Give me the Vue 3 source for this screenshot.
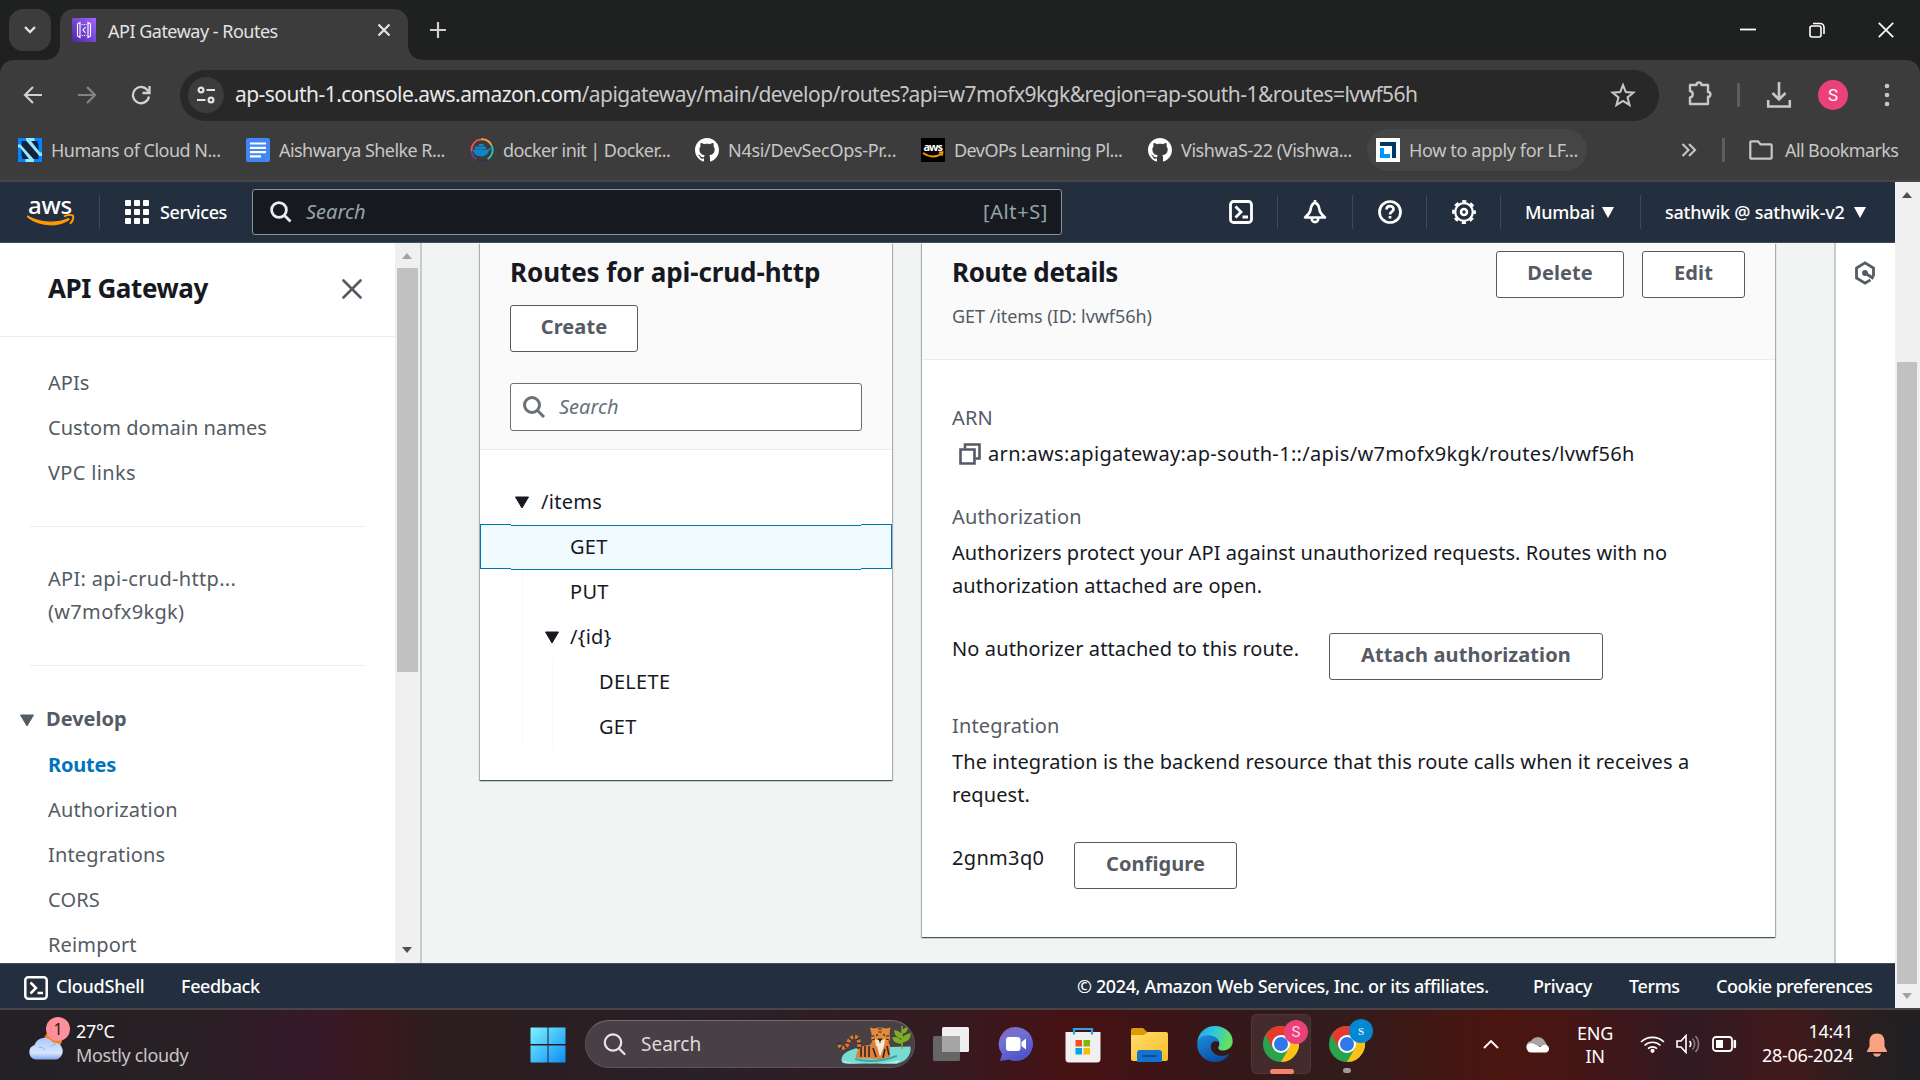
<script setup>
const bookmarks = [
  { icon: 'cn', label: 'Humans of Cloud N...', cls: 'b1' },
  { icon: 'doc', label: 'Aishwarya Shelke R...', cls: 'b2' },
  { icon: 'docker', label: 'docker init | Docker...', cls: 'b3' },
  { icon: 'github', label: 'N4si/DevSecOps-Pr...', cls: 'b4' },
  { icon: 'aws', label: 'DevOPs Learning Pl...', cls: 'b5' },
  { icon: 'github', label: 'VishwaS-22 (Vishwa...', cls: 'b6' },
  { icon: 'lf', label: 'How to apply for LF...', cls: 'b7' },
]
const topLinks = ['APIs', 'Custom domain names', 'VPC links']
const developLinks = ['Routes', 'Authorization', 'Integrations', 'CORS', 'Reimport']
</script>

<template>
  <div class="screen">
    <!-- browser tab strip -->
    <div class="tabstrip">
      <div class="tabmenu">
        <svg width="14" height="10" viewBox="0 0 14 10"><path d="M2 2l5 5 5-5" fill="none" stroke="#e3e3e3" stroke-width="2.4" /></svg>
      </div>
      <div class="tab">
        <svg class="favicon" width="24" height="24" viewBox="0 0 24 24">
          <defs><linearGradient id="gw" x1="0" y1="1" x2="1" y2="0"><stop offset="0" stop-color="#4d27a8" /><stop offset="1" stop-color="#a166ff" /></linearGradient></defs>
          <rect width="24" height="24" fill="url(#gw)" />
          <path d="M8 4.500L5.500 6v12L8 19.500zM16 4.500L18.500 6v12L16 19.500zM13.500 9L11 12l2.500 3" fill="none" stroke="#fff" stroke-width="1.100" />
          <path d="M9.500 6.500h5M9.500 17.500h5" stroke="#fff" stroke-dasharray="1.200 1" />
        </svg>
        <span class="tabtitle">API Gateway - Routes</span>
        <svg class="tabclose" width="14" height="14" viewBox="0 0 14 14"><path d="M1.500 1.500l11 11M12.500 1.500l-11 11" stroke="#e3e3e3" stroke-width="2.200" /></svg>
      </div>
      <svg class="newtab" width="18" height="18" viewBox="0 0 18 18"><path d="M9 1v16M1 9h16" stroke="#d0d0d0" stroke-width="2.200" /></svg>
      <div class="winctl">
        <svg width="16" height="16" viewBox="0 0 16 16"><path d="M0 7.500h16" stroke="#fff" stroke-width="1.800" /></svg>
        <svg width="16" height="16" viewBox="0 0 16 16" fill="none" stroke="#fff" stroke-width="1.600"><rect x="1" y="4" width="11" height="11" rx="2" /><path d="M4 1.500h7a4 4 0 0 1 4 4V12" /></svg>
        <svg width="16" height="16" viewBox="0 0 16 16"><path d="M.8.8l14.400 14.400M15.200.8L.8 15.200" stroke="#fff" stroke-width="1.700" /></svg>
      </div>
    </div>

    <!-- address bar -->
    <div class="toolbar">
      <svg class="nav1" width="20" height="20" viewBox="0 0 20 20" fill="none" stroke="#d0d0d0" stroke-width="2.200"><path d="M19 10H2.500M10 2l-8 8 8 8" /></svg>
      <svg class="nav2" width="20" height="20" viewBox="0 0 20 20" fill="none" stroke="#838383" stroke-width="2.200"><path d="M1 10h16.500M10 2l8 8-8 8" /></svg>
      <svg class="nav3" width="20" height="20" viewBox="0 0 20 20" fill="none" stroke="#d0d0d0" stroke-width="2.300"><path d="M17.300 6.500A8.100 8.100 0 1 0 18 11.500" /><path d="M18.500 1v7h-7" /></svg>
      <div class="omnibox">
        <span class="chip">
          <svg width="20" height="20" viewBox="0 0 20 20" fill="none" stroke="#e3e3e3" stroke-width="2.200"><circle cx="5" cy="5" r="2.400" /><path d="M10.500 5H19M1 15h8.500" /><circle cx="15" cy="15" r="2.400" /></svg>
        </span>
        <span class="url"><b>ap-south-1.console.aws.amazon.com</b>/apigateway/main/develop/routes?api=w7mofx9kgk&amp;region=ap-south-1&amp;routes=lvwf56h</span>
        <svg class="star" width="26" height="26" viewBox="0 0 24 24"><path d="M12 2.800l2.600 6.500 7 .5-5.400 4.500 1.800 6.900-6-3.800-6 3.800 1.800-6.900L2.400 9.800l7-.5z" fill="none" stroke="#c7c7c7" stroke-width="1.900" /></svg>
      </div>
      <svg class="puzzle" width="26" height="26" viewBox="0 0 26 26"><path d="M3 5h6.500a2.500 2.500 0 0 1 5 0H21v7a2.400 2.400 0 0 1 0 4.800V24H3v-6.500a3.300 3.300 0 0 0 0-6.500z" fill="none" stroke="#c7c7c7" stroke-width="2.400" stroke-linejoin="round" /></svg>
      <i class="vbar"></i>
      <svg class="dl" width="26" height="28" viewBox="0 0 26 28" fill="none" stroke="#c7c7c7" stroke-width="2.600"><path d="M13 1v17M6.500 12l6.500 6.500 6.500-6.500M2.200 19v6.500h21.600V19" /></svg>
      <span class="avatar">S</span>
      <svg class="dots" width="6" height="24" viewBox="0 0 6 24" fill="#c7c7c7"><circle cx="3" cy="3" r="2.300" /><circle cx="3" cy="12" r="2.300" /><circle cx="3" cy="21" r="2.300" /></svg>
    </div>

    <!-- bookmarks -->
    <div class="bookmarks">
      <div v-for="b in bookmarks" :key="b.label" class="bm" :class="b.cls">
        <svg v-if="b.icon === 'cn'" width="24" height="24" viewBox="0 0 24 24"><rect width="24" height="24" fill="#0086ff" /><path d="M3.500 3h17v18h-17z" fill="#16223c" /><path d="M8 0h8.500v3H13l9 11.500h2V18h-2.500L8 2.500zM0 6.500h2.500L16 21.500V24H7.500v-3H11L2 9.500H0z" fill="#93eaff" /><path d="M19 3.500l3 0v5zM2 15.500l3 5H2z" fill="#0086ff" /></svg>
        <svg v-else-if="b.icon === 'doc'" width="24" height="24" viewBox="0 0 24 24"><rect width="24" height="24" rx="2" fill="#4285f4" /><path d="M4 5.500h16M4 9.800h16M4 14.100h16M4 18.400h11" stroke="#fff" stroke-width="2.200" /></svg>
        <svg v-else-if="b.icon === 'docker'" width="24" height="24" viewBox="0 0 24 24" fill="none"><path d="M1.500 13A10.700 10.700 0 0 1 11 1.300" stroke="#ef4b5f" stroke-width="1.800" /><path d="M11 1.300a10.700 10.700 0 0 1 10.500 6" stroke="#f7a64a" stroke-width="1.800" /><path d="M21.500 7.300a10.700 10.700 0 0 1-4 14" stroke="#2fc5c0" stroke-width="1.800" /><path d="M17.500 21.300a10.700 10.700 0 0 1-11 0" stroke="#1a3a5a" stroke-width="1.500" /><path d="M6.500 21.300A10.700 10.700 0 0 1 1.500 13" stroke="#6a3fa0" stroke-width="1.800" /><path d="M3 11.500h15.500c.3-1.500 1.500-2 3-1.300-.5 1.500-1.500 2-2.500 2-1 4-3.500 6-8 6s-7.500-2-8-6.700zM5 8.500h11V11H5zM9 6h4.500v2H9z" fill="#0e87c9" /></svg>
        <svg v-else-if="b.icon === 'github'" width="24" height="24" viewBox="0 0 16 16"><path fill="#fff" d="M8 0C3.580 0 0 3.580 0 8c0 3.540 2.290 6.530 5.470 7.590.4.070.550-.170.550-.380 0-.190-.010-.820-.010-1.490-2.010.370-2.530-.490-2.690-.940-.090-.230-.480-.940-.820-1.130-.280-.150-.680-.520-.010-.530.630-.010 1.080.580 1.230.820.720 1.210 1.870.870 2.330.660.070-.520.280-.870.510-1.070-1.780-.200-3.640-.890-3.640-3.950 0-.870.310-1.590.820-2.150-.080-.200-.360-1.020.080-2.120 0 0 .670-.210 2.200.820.640-.180 1.320-.270 2-.270s1.360.090 2 .270c1.530-1.040 2.200-.820 2.200-.820.440 1.100.160 1.920.080 2.120.510.560.820 1.270.820 2.150 0 3.070-1.870 3.750-3.650 3.950.290.250.540.730.540 1.480 0 1.070-.010 1.930-.010 2.200 0 .210.150.460.550.380A8.010 8.010 0 0 0 16 8c0-4.420-3.580-8-8-8z" /></svg>
        <svg v-else-if="b.icon === 'aws'" width="24" height="24" viewBox="0 0 24 24"><rect width="24" height="24" fill="#000" /><text x="2.500" y="13" font-size="11" font-weight="700" font-family="Noto Sans, sans-serif" fill="#fff" textLength="19">aws</text><path d="M2 15c6 4.500 13 4.500 18 1M18 14.500l3.500-.3-.8 3.500" fill="none" stroke="#f90" stroke-width="1.800" /></svg>
        <svg v-else width="24" height="24" viewBox="0 0 24 24"><rect width="24" height="24" fill="#fff" /><path d="M4 4h16v16h-4V8H4z" fill="#003764" /><path d="M4 10h4v6h6v4H4z" fill="#0094ff" /></svg>
        <span>{{ b.label }}</span>
      </div>
      <svg class="more" width="16" height="14" viewBox="0 0 16 14"><path d="M1.500 1l6 6-6 6M8 1l6 6-6 6" fill="none" stroke="#c7c7c7" stroke-width="2.100" /></svg>
      <i class="vbar2"></i>
      <svg class="folder" width="24" height="20" viewBox="0 0 24 20"><path d="M1.300 2.500q0-1.200 1.200-1.200H9l2.500 3H21.500q1.200 0 1.200 1.200v12q0 1.200-1.200 1.200h-19q-1.200 0-1.200-1.200z" fill="none" stroke="#c7c7c7" stroke-width="2.200" /></svg>
      <span class="allbm">All Bookmarks</span>
    </div>

    <!-- page viewport -->
    <div class="viewport">
      <div class="page">
        <header class="awsbar">
          <svg class="logo" width="48" height="44" viewBox="0 0 48 44">
            <text x="1" y="26" font-size="23" font-weight="500" font-family="Noto Sans, sans-serif" fill="#fff" textLength="44" lengthAdjust="spacingAndGlyphs">aws</text>
            <path d="M0 28.500C13 39 32 39 42 31.500l-.5-1C31 35.500 14 36 .5 28z" fill="#f90" stroke="#f90" stroke-width="1.200" />
            <path d="M37 28.500c3-2 7-2 9-.8.500 2.500-.5 6-3 8" fill="none" stroke="#f90" stroke-width="2" />
          </svg>
          <i class="sep s0"></i>
          <svg class="grid" width="24" height="24" viewBox="0 0 24 24" fill="#fff"><template v-for="r in 3" :key="r"><rect v-for="c in 3" :key="c" :x="(c - 1) * 9" :y="(r - 1) * 9" width="6" height="6" rx="1" /></template></svg>
          <span class="services">Services</span>
          <div class="topsearch">
            <svg width="22" height="22" viewBox="0 0 22 22" fill="none" stroke="#eaeded" stroke-width="2.800"><circle cx="9" cy="9" r="7.400" /><path d="M14 14l6.500 6.500" /></svg>
            <em>Search</em><span>[Alt+S]</span>
          </div>
          <svg class="ti shell" width="24" height="24" viewBox="0 0 24 24" fill="none" stroke="#fff" stroke-width="2.800"><rect x="1.500" y="1.500" width="21" height="21" rx="3" /><path d="M6.500 6.500l5.500 5.500-5.500 5.500M13.500 17h5.500" /></svg>
          <i class="sep s1"></i>
          <svg class="ti bell" width="24" height="24" viewBox="0 0 24 24" fill="none" stroke="#fff" stroke-width="2.600" stroke-linejoin="round"><path d="M12 2.500c-3 1.500-4 3.500-4.300 6.500-.3 3-1 4.500-5.700 8.500h20c-4.700-4-5.400-5.500-5.700-8.500C16 6 15 4 12 2.500zM8.700 18.500a3.300 3.600 0 0 0 6.600 0M12 0v3" /></svg>
          <i class="sep s2"></i>
          <svg class="ti help" width="24" height="24" viewBox="0 0 24 24" fill="none" stroke="#fff" stroke-width="2.700"><circle cx="12" cy="12" r="10.500" /><path d="M8.500 9.500c0-4.500 7-4.300 7-.3 0 2.600-3.500 2.600-3.500 5.300M12 16v2.500" /></svg>
          <i class="sep s3"></i>
          <svg class="ti gear" width="24" height="24" viewBox="0 0 24 24" fill="none" stroke="#fff"><circle cx="12" cy="12" r="8.800" stroke-width="2.300" /><circle cx="12" cy="12" r="10.600" stroke-width="2.600" stroke-dasharray="4.200 4.125" stroke-dashoffset="2.100" /><circle cx="12" cy="12" r="3" stroke-width="2.600" /></svg>
          <i class="sep s4"></i>
          <span class="region">Mumbai</span><i class="tri"></i>
          <i class="sep s5"></i>
          <span class="account">sathwik @ sathwik-v2</span><i class="tri"></i>
        </header>

        <div class="main">
          <nav class="side">
            <div class="sidehead">
              <h2>API Gateway</h2>
              <svg width="20" height="20" viewBox="0 0 20 20"><path d="M1.500 1.500l17 17M18.500 1.500l-17 17" stroke="#545b64" stroke-width="2.600" stroke-linecap="round" /></svg>
            </div>
            <div class="links first"><a v-for="l in topLinks" :key="l" :class="{ wide: l === 'VPC links' }">{{ l }}</a></div>
            <hr />
            <p class="apiname">API: api-crud-http...<br />(w7mofx9kgk)</p>
            <hr />
            <div class="develop"><svg width="16" height="13" viewBox="0 0 16 13"><path d="M1.500 1h13L8 12z" fill="#545b64" stroke="#545b64" stroke-linejoin="round" /></svg><b>Develop</b></div>
            <div class="links dev"><a v-for="l in developLinks" :key="l" :class="{ on: l === 'Routes' }">{{ l }}</a></div>
          </nav>
          <div class="sidebar-scroll">
            <i class="up grey"></i><i class="thumb"></i><i class="down"></i>
          </div>

          <div class="content">
            <section class="card routes">
              <div class="rhead">
                <h2>Routes for api-crud-http</h2>
                <button class="btn create">Create</button>
                <div class="rsearch">
                  <svg width="22" height="22" viewBox="0 0 22 22" fill="none" stroke="#687078" stroke-width="3"><circle cx="9" cy="9" r="7.500" /><path d="M14 14l7 7" /></svg><em>Search</em>
                </div>
              </div>
              <div class="tree">
                <div class="node l0 first"><svg width="16" height="13" viewBox="0 0 16 13"><path d="M1.500 1h13L8 12z" fill="#16191f" stroke="#16191f" stroke-linejoin="round" /></svg>/items</div>
                <div class="sel"><i class="selside l"></i><div class="selmid">GET</div><i class="selside r"></i></div>
                <div class="branch">
                  <div class="node l1">PUT</div>
                  <div class="node l1t"><svg width="16" height="13" viewBox="0 0 16 13"><path d="M1.500 1h13L8 12z" fill="#16191f" stroke="#16191f" stroke-linejoin="round" /></svg>/{id}</div>
                  <div class="branch inner">
                    <div class="node l2">DELETE</div>
                    <div class="node l2">GET</div>
                  </div>
                </div>
              </div>
            </section>

            <section class="card details">
              <div class="dhead">
                <div>
                  <h2>Route details</h2>
                  <p class="sub">GET /items (ID: lvwf56h)</p>
                </div>
                <div class="actions"><button class="btn delete">Delete</button><button class="btn edit">Edit</button></div>
              </div>
              <div class="dbody">
                <label>ARN</label>
                <p class="arn"><svg width="22" height="22" viewBox="0 0 22 22" fill="none" stroke="#545b64" stroke-width="2.600"><path d="M1.500 6.500h14v14h-14z" /><path d="M6 5.500V1.500h14.500V15.500h-4" /></svg><span>arn:aws:apigateway:ap-south-1::/apis/w7mofx9kgk/routes/lvwf56h</span></p>
                <label>Authorization</label>
                <p class="t1">Authorizers protect your API against unauthorized requests. Routes with no<br />authorization attached are open.</p>
                <div class="act"><span class="t2">No authorizer attached to this route.</span><button class="btn attach">Attach authorization</button></div>
                <label>Integration</label>
                <p class="t3">The integration is the backend resource that this route calls when it receives a<br />request.</p>
                <div class="act last"><span class="t4">2gnm3q0</span><button class="btn configure">Configure</button></div>
              </div>
            </section>
          </div>

          <aside class="tools">
            <svg width="22" height="24" viewBox="0 0 22 24" fill="none" stroke="#545b64" stroke-width="2.800"><path d="M19.500 15.500V7L11 1.800 2.500 7v10l8.500 5.200 5.500-3.300M11 12l8.500 5.500" /><circle cx="11" cy="12" r="2.200" fill="#545b64" stroke-width="1.500" /></svg>
          </aside>
        </div>

        <footer class="awsfoot">
          <svg width="24" height="24" viewBox="0 0 24 24" fill="none" stroke="#fff" stroke-width="2.500"><rect x="1.300" y="1.300" width="21.400" height="21.400" rx="3" /><path d="M6.500 6.500l5.500 5.500-5.500 5.500M13.500 17h5.500" /></svg>
          <span class="f1">CloudShell</span><span class="f2">Feedback</span>
          <span class="f3">© 2024, Amazon Web Services, Inc. or its affiliates.</span>
          <span class="f4">Privacy</span><span class="f5">Terms</span><span class="f6">Cookie preferences</span>
        </footer>
      </div>
      <div class="page-scroll"><i class="up"></i><i class="thumb"></i><i class="down grey"></i></div>
    </div>

    <!-- Windows taskbar -->
    <div class="taskbar">
      <div class="weather">
        <svg width="42" height="44" viewBox="0 0 42 44">
          <defs><linearGradient id="cl" x1="0" y1="0" x2="0" y2="1"><stop offset="0" stop-color="#a9c8fb" /><stop offset=".7" stop-color="#d6e6fd" /><stop offset="1" stop-color="#7fa6ee" /></linearGradient></defs>
          <circle cx="26" cy="24" r="9" fill="#f5821f" />
          <path d="M8.500 43.500a7.500 7.500 0 0 1-1-14.500A10.500 10.500 0 0 1 26 26.500a8.500 8.500 0 0 1 2.500 17z" fill="url(#cl)" />
          <path d="M12 31a8 8 0 0 1 6.500 3M24 31q2-3 5-3" stroke="#8eb2f2" fill="none" />
        </svg>
        <span class="wbadge">1</span>
        <div class="wtext"><span class="deg">27°C</span><span class="cond">Mostly cloudy</span></div>
      </div>
      <svg class="start" width="36" height="36" viewBox="0 0 36 36"><defs><linearGradient id="win" x1="0" y1="0" x2="1" y2="1"><stop offset="0" stop-color="#7df3ff" /><stop offset="1" stop-color="#0a8df5" /></linearGradient></defs><path d="M1 .5h16.500v16.500H.5V1zM18.500.5H35l.5.500v16h-17zM.5 18.500h17v17H1l-.5-.5zM18.500 18.500h17V35l-.5.500H18.500z" fill="url(#win)" /></svg>
      <div class="tsearch">
        <svg class="mag" width="23" height="23" viewBox="0 0 23 23" fill="none" stroke="#e8e8ea" stroke-width="2.200" stroke-linecap="round"><circle cx="10" cy="9.500" r="8.200" /><path d="M16 15.500l5.500 5.500" /></svg>
        <span>Search</span>
        <svg class="tiger" width="76" height="40" viewBox="0 0 76 40">
          <path d="M5 37C2 30 12 23.500 25 22.500l48.500-1C75 30 68 37.500 60 38.500H12q-6 0-7-1.500z" fill="#7adbd2" />
          <path d="M5 36q30 6 58-1l-3 3.500H12q-5 0-7-2.500z" fill="#b5f2e6" />
          <path d="M18 34q20 5 42-3" stroke="#3aa6a5" stroke-width="2" fill="none" />
          <path d="M2 18c0 8 8 5 9 0s7-9 10-4-1 8 3 13" stroke="#d9792f" stroke-width="3.600" fill="none" />
          <path d="M2 18c0 8 8 5 9 0s7-9 10-4-1 8 3 13" stroke="#2d2430" stroke-width="4" stroke-dasharray="1.400 3.200" fill="none" />
          <path d="M19 33c0-9 5-13 14-13l5-8h10l5 8v12l-10 2z" fill="#df8136" />
          <path d="M24 22v10M28 21v11M32 21v11M50 21l2 9M36 23l3 9M48 24l-2 9" stroke="#30232c" stroke-width="1.600" />
          <path d="M33 2.500l4 1q6-2 12 0l4.500-1-1 6q2 7-3 11-6 4-12-.5-4.500-4-3-10z" fill="#e48a3b" />
          <path d="M38 14q5 3 10 0l-1 7q-4 2-8 0z" fill="#f4eadc" /><path d="M41 14h4l-2 2zM41 4h4M41.500 7h3M34 11h3.500M49 11h3.500M35 15l3-1M49 14l3 1M43 16v2" stroke="#2b2028" fill="#2b2028" />
          <path d="M39 10h2M46 10h2" stroke="#224133" stroke-width="1.700" />
          <path d="M40 21l3 11 4-11z" fill="#f4eadc" />
          <path d="M65 24V1M65 13c-5-1-7-4-7-7 5 1 7 4 7 7zM65 18c-5 0-8-2-9-5 5-1 8 2 9 5zM65 17c5-1 8-4 8-8-5 1-8 4-8 8zM65 8q5-1 5-5-4 1-5 5z" fill="#80ad28" stroke="#80ad28" stroke-width="1.500" />
        </svg>
      </div>
      <svg class="tv" width="36" height="34" viewBox="0 0 36 34"><rect y="9" width="27" height="25" rx="1.500" fill="#666" /><rect x="9" width="27" height="25" rx="1.500" fill="#efefef" /><rect x="9" y="9" width="18" height="16" fill="#a6a4a4" /></svg>
      <svg class="chat" width="36" height="36" viewBox="0 0 36 36"><defs><linearGradient id="ch" x1="0" y1="0" x2=".5" y2="1"><stop offset="0" stop-color="#8d64a8" /><stop offset=".4" stop-color="#7172d4" /><stop offset="1" stop-color="#5055ca" /></linearGradient></defs><path d="M18 1a17 17 0 1 1-7 32.500L2 35l2-7A17 17 0 0 1 18 1z" fill="url(#ch)" /><rect x="8" y="11" width="14.500" height="14" rx="3" fill="#fff" /><path d="M23.500 16l4.500-3.500v11L23.500 20z" fill="#fff" /></svg>
      <svg class="store" width="36" height="36" viewBox="0 0 36 36"><path d="M.5 5h35v27q0 3.500-3.500 3.500H4Q.5 35.500.5 32z" fill="#f0f0f0" /><path d="M9 7.500V2h18v5.500" fill="none" stroke="#2aa5e8" stroke-width="2.200" /><path d="M10.500 13H17v6.500h-6.500z" fill="#f25022" /><path d="M18.500 13H25v6.500h-6.500z" fill="#7fba00" /><path d="M10.500 21H17v6.500h-6.500z" fill="#00a4ef" /><path d="M18.500 21H25v6.500h-6.500z" fill="#ffb900" /></svg>
      <svg class="exp" width="37" height="34" viewBox="0 0 37 34"><defs><linearGradient id="fo" x1="0" y1="0" x2="1" y2="1"><stop offset="0" stop-color="#ffdd6b" /><stop offset="1" stop-color="#f9bd28" /></linearGradient></defs><path d="M0 2q0-2 2-2h10l4 4-3 8H0z" fill="#dd9a05" /><path d="M0 7h13l3.500-3H35q2 0 2 2v25q0 2-2 2H2q-2 0-2-2z" fill="url(#fo)" /><path d="M6 34V25q0-3 3-3h19q3 0 3 3v9z" fill="#1173ce" /><path d="M12 28h13" stroke="#0a4e96" stroke-width="1.800" stroke-linecap="round" /></svg>
      <svg class="edge" width="36" height="36" viewBox="0 0 36 36"><defs><linearGradient id="e1" x1="0" y1="0" x2="1" y2=".3"><stop offset="0" stop-color="#2b9fe6" /><stop offset=".5" stop-color="#2fc6de" /><stop offset="1" stop-color="#62e25a" /></linearGradient><linearGradient id="e2" x1="0" y1="0" x2=".6" y2="1"><stop offset="0" stop-color="#1a8ddb" /><stop offset="1" stop-color="#0b4fa3" /></linearGradient></defs><path d="M.3 17C1 6 9 0 18 0c10 0 17.700 7 17.700 15 0 6-4.500 9.500-9.500 9.500-5 0-5.500-2.500-4.500-4 1.500-2 1-8.500-6.500-9.500C7 10.500 1.500 13 .3 17z" fill="url(#e1)" /><path d="M.2 18.500C.5 12 6 9 11.500 9.200 17 9.500 21 12 22 16c-7-3-9.500 3-7.500 8 3 6.500 12 7.500 18 3.500-3 5-8 8.500-14.500 8.500C8 36 0 28 .2 18.500z" fill="url(#e2)" /></svg>
      <div v-for="n in 2" :key="n" class="ctile" :class="n === 1 ? 'active' : 'idle'">
        <svg width="36" height="36" viewBox="0 0 36 36"><circle cx="18" cy="18" r="18" fill="#2ba24c" /><path d="M2.400 9A18 18 0 0 1 33.600 9H18l-7.800 13.500z" fill="#e33b2e" /><path d="M33.600 9A18 18 0 0 1 18 36l7.800-13.500L18 9z" fill="#fbc116" /><circle cx="18" cy="18" r="9" fill="#fff" /><circle cx="18" cy="18" r="7" fill="#2f78ea" /></svg>
        <span class="cbadge">S</span><i class="ind"></i>
      </div>
      <svg class="chev" width="16" height="10" viewBox="0 0 16 10"><path d="M1 9l7-7 7 7" fill="none" stroke="#fff" stroke-width="1.900" /></svg>
      <svg class="od" width="25" height="17" viewBox="0 0 25 17"><path d="M1 12a5 5 0 0 1 4-7A8 8 0 0 1 18 4l3 5z" fill="#aaa3a3" /><path d="M5 16.500a5 5 0 0 1-3-8.500q4-2 8 1l4 2q3-3 6.500-2a4 4 0 0 1 0 7.500z" fill="#fff" /></svg>
      <div class="lang"><span>ENG</span><span>IN</span></div>
      <svg class="wifi" width="25" height="18" viewBox="0 0 25 18" fill="none" stroke="#fff" stroke-width="1.600"><path d="M1 7a16.500 16.500 0 0 1 23 0M4.500 10.500a11.500 11.500 0 0 1 16 0M8 13.700a6.500 6.500 0 0 1 9 0" /><circle cx="12.500" cy="15.800" r="1.300" fill="#fff" /></svg>
      <svg class="vol" width="25" height="20" viewBox="0 0 25 20" fill="none" stroke="#fff" stroke-width="1.600"><path d="M1 7h4l5-5.500v17L5 13H1zM13.500 7a4.500 4.500 0 0 1 0 6" /><path d="M16.500 4.500a8 8 0 0 1 0 11M19.500 2a12 12 0 0 1 0 16" stroke="#8a7676" /></svg>
      <svg class="bat" width="25" height="16" viewBox="0 0 25 16" fill="none" stroke="#fff" stroke-width="1.800"><rect x="1" y="1" width="19" height="14" rx="3" /><path d="M22.800 5v6" stroke-width="2.600" stroke-linecap="round" /><rect x="4" y="4" width="7" height="8" fill="#fff" stroke="none" /></svg>
      <div class="clock"><span class="time">14:41</span><span class="date">28-06-2024</span></div>
      <svg class="nbell" width="20" height="24" viewBox="0 0 20 24" fill="#fba184"><path d="M10 .5c5 0 7.500 3.500 7.500 8v5L20 18v1H0v-1l2.500-4.500v-5c0-4.500 2.500-8 7.500-8zM6 20.500h8q-1 3.300-4 3.300t-4-3.300z" /></svg>
    </div>
  </div>
</template>

<style>
body { margin: 0; overflow: hidden; }
</style>

<style scoped>
.screen { width: 1920px; height: 1080px; overflow: hidden; display: flex; flex-direction: column; font-family: "Noto Sans", "Open Sans", sans-serif; font-size: 20px; white-space: nowrap; background: #3c3c3c; }
.screen * { box-sizing: border-box; }
svg { display: block; flex: none; }
h2, p { margin: 0; }
i { display: block; flex: none; }

.tabstrip { position: relative; height: 60px; flex: none; display: flex; background: #1f2020; }
.tabmenu { width: 42px; height: 42px; margin: 9px 9px 0; border-radius: 14px; background: #3c3c3c; display: flex; align-items: center; justify-content: center; }
.tab { position: relative; width: 348px; height: 51px; margin-top: 9px; border-radius: 14px 14px 0 0; background: #3c3c3c; display: flex; padding-left: 12px; }
.tab::before, .tab::after { content: ""; position: absolute; bottom: 0; width: 14px; height: 14px; }
.tab::before { left: -14px; background: radial-gradient(circle at 0 0, transparent 13.5px, #3c3c3c 14px); }
.tab::after { right: -14px; background: radial-gradient(circle at 100% 0, transparent 13.5px, #3c3c3c 14px); }
.favicon { margin-top: 9px; }
.tabtitle { width: 269px; margin-left: 12px; line-height: 45px; font-size: 18px; letter-spacing: -0.5px; color: #e3e3e3; }
.tabclose { margin-top: 14px; }
.newtab { margin: 21px 0 0 21px; }
.winctl { margin: 22px 26px 0 auto; display: flex; gap: 53px; }

.toolbar { height: 69px; flex: none; display: flex; align-items: center; padding-top: 1px; border-radius: 14px 14px 0 0; background: #3c3c3c; box-shadow: 0 -14px 0 #1f2020; }
.nav1 { margin-left: 23px; }
.nav2 { margin-left: 34px; }
.nav3 { margin-left: 34px; }
.omnibox { width: 1479px; height: 51px; margin-left: 29px; border-radius: 26px; background: #282828; display: flex; align-items: center; }
.chip { width: 36px; height: 36px; margin-left: 8px; border-radius: 50%; background: #3c3c3c; display: flex; align-items: center; justify-content: center; }
.url { width: 1386px; margin-left: 11px; font-size: 21px; line-height: 30px; letter-spacing: -0.54px; color: #c7c7c7; padding-bottom: 2px; }
.url b { font-weight: 400; color: #e9e9e9; }
.star { margin-left: -11px; }
.puzzle { margin: 0 0 4px 28px; }
.vbar { width: 3px; height: 24px; margin-left: 24px; background: #5e5e5e; border-radius: 1px; }
.dl { margin-left: 26px; }
.avatar { width: 30px; height: 30px; margin-left: 26px; border-radius: 50%; background: #ec407a; color: #fff; font: 17px/30px Roboto, sans-serif; text-align: center; }
.dots { margin-left: 36px; }

.bookmarks { height: 53px; flex: none; display: flex; border-bottom: 2px solid #474747; font-size: 18px; color: #c7c7c7; }
.bm { display: flex; height: 42px; padding: 9px 0 0 9px; gap: 9px; line-height: 24px; border-radius: 21px; letter-spacing: -0.5px; }
.b1 { width: 228px; margin-left: 9px; }
.b2 { width: 224px; letter-spacing: -0.56px; }
.b3 { width: 225px; letter-spacing: -0.56px; }
.b4 { width: 226px; letter-spacing: -0.3px; }
.b5 { width: 227px; letter-spacing: -0.56px; }
.b6 { width: 228px; letter-spacing: -0.42px; }
.b7 { width: 220px; background: #454545; letter-spacing: -0.36px; }
.more { margin: 14px 0 0 94px; }
.vbar2 { width: 3px; height: 24px; margin: 9px 0 0 25px; background: #5e5e5e; }
.folder { margin: 11px 0 0 24px; }
.allbm { margin-left: 12px; line-height: 42px; letter-spacing: -0.6px; }

.viewport { height: 826px; flex: none; display: flex; }
.page { width: 1895px; display: flex; flex-direction: column; }
.awsbar { height: 61px; flex: none; display: flex; align-items: center; background: #232f3e; border-bottom: 1px solid #414d5c; color: #fff; font-size: 18px; font-weight: 500; letter-spacing: -0.25px; }
.logo { margin: 0 0 4px 27px; }
.sep { width: 1px; height: 34px; background: #3e4957; }
.s0 { margin-left: 24px; }
.grid { margin-left: 25px; }
.services { width: 92px; margin-left: 11px; padding-bottom: 1px; letter-spacing: -0.4px; }
.topsearch { width: 810px; height: 46px; border: 1px solid #879596; border-radius: 3px; background: #16191f; display: flex; align-items: center; padding: 0 13px 2px 17px; color: #95a5a6; font-size: 20px; font-weight: 400; letter-spacing: 0; }
.topsearch svg { margin-top: 2px; }
.topsearch em { margin-left: 14px; }
.topsearch span { margin-left: auto; letter-spacing: 0.6px; }
.shell { margin-left: 167px; }
.s1 { margin: 0 25px 0 24px; }
.s2 { margin: 0 25px 0 25px; }
.s3 { margin: 0 25px 0 24px; }
.s4 { margin: 0 24px 0 24px; }
.region { width: 77px; padding-bottom: 1px; }
.tri { border: 6.500px solid transparent; border-top: 11px solid #fff; border-bottom: 0; }
.s5 { margin: 0 24px 0 26px; }
.account { width: 189px; padding-bottom: 1px; }

.main { height: 720px; flex: none; display: flex; background: #f2f3f3; overflow: hidden; }
.side { width: 395px; height: 720px; background: #fff; color: #545b64; }
.sidehead { height: 94px; border-bottom: 1px solid #eaeded; display: flex; padding: 27px 33px 0 48px; justify-content: space-between; }
.sidehead svg { margin-top: 9px; }
h2 { font-size: 26px; line-height: 36px; font-weight: 700; color: #16191f; letter-spacing: -0.4px; }
.links { display: flex; flex-direction: column; padding-left: 48px; }
.links.first { padding-top: 23px; margin-bottom: 31px; }
.links a { height: 45px; line-height: 45px; letter-spacing: 0.05px; }
.links.dev a { letter-spacing: 0.15px; }
.links a.wide { letter-spacing: 0.35px; }
.links.dev a.on { color: #0073bb; font-weight: 700; letter-spacing: -0.2px; }
hr { margin: 0 30px; height: 1px; border: 0; background: #eaeded; }
.apiname { padding: 35px 0 37px 48px; line-height: 33px; letter-spacing: 0.32px; }
.develop { display: flex; height: 76px; padding: 30px 0 1px 19px; line-height: 45px; }
.develop svg { margin: 18px 11px 0 0; }

.sidebar-scroll { width: 27px; background: #f0f0f0; border-right: 2px solid #c6cbcd; display: flex; flex-direction: column; align-items: flex-start; padding: 10px 0 10px 2px; }
.up, .down { width: 0; height: 0; margin-left: 5px; border: 5.500px solid transparent; }
.up { border-top: 0; border-bottom: 6px solid #505050; }
.down { border-bottom: 0; border-top: 6px solid #505050; margin-top: auto; }
.up.grey { border-bottom-color: #a3a3a3; }
.down.grey { border-top-color: #a3a3a3; }
.sidebar-scroll .thumb { width: 21px; height: 404px; margin-top: 9px; background: #c1c1c1; }

.content { width: 1412px; display: flex; align-items: flex-start; padding-left: 58px; gap: 30px; }
.card { background: #fff; box-shadow: 0 1px 1px 0 rgba(0, 28, 36, .5), 1px 1px 1px 0 rgba(0, 28, 36, .25), -1px 1px 1px 0 rgba(0, 28, 36, .25); }
.routes { width: 412px; height: 537px; }
.rhead { height: 207px; padding: 11px 30px 0; background: #fafafa; border-bottom: 1px solid #eaeded; }
.rhead h2 { letter-spacing: -0.08px; }
.btn { display: block; padding: 0; height: 47px; border: 1px solid #545b64; border-radius: 3px; background: #fff; color: #545b64; font: 700 20px/42px "Noto Sans", sans-serif; letter-spacing: 0.1px; text-align: center; padding-bottom: 3px; }
.create { width: 128px; margin-top: 15px; }
.rsearch { height: 48px; margin-top: 31px; border: 1px solid #687078; border-radius: 3px; background: #fff; display: flex; align-items: center; padding-left: 12px; color: #687078; }
.rsearch em { margin-left: 14px; padding-bottom: 2px; }
.tree { padding-top: 28px; color: #16191f; letter-spacing: 0.3px; }
.node { height: 45px; line-height: 45px; display: flex; }
.node svg { margin: 17px 11px 0 0; }
.l0 { padding-left: 34px; height: 46px; line-height: 47px; }
.l0 svg { margin-top: 18px; }
.sel { position: relative; display: flex; height: 45px; }
.sel::after { content: ""; position: absolute; left: 42px; top: 3px; width: 1px; height: 41px; background: #f7fafb; }
.selside { width: 31px; height: 45px; background: #f1faff; border: 1px solid #0073bb; }
.selside.l { border-right: 0; }
.selside.r { border-left: 0; }
.selmid { position: relative; top: 1px; flex: 1; height: 45px; padding-left: 59px; line-height: 42px; background: #f1faff; border: solid #0073bb; border-width: 1px 0; }
.branch { position: relative; }
.branch::before { content: ""; position: absolute; left: 42px; top: 1px; width: 1px; height: calc(100% - 1px); background: #f7f8f8; }
.branch.inner::before { left: 72px; }
.l1 { padding-left: 90px; }
.l1t { padding-left: 64px; }
.l1t svg { margin-right: 10px; }
.l2 { padding-left: 119px; }

.details { width: 853px; height: 694px; }
.dhead { height: 117px; padding: 11px 30px 0; display: flex; justify-content: space-between; background: #fafafa; border-bottom: 1px solid #eaeded; }
.sub { margin-top: 14px; font-size: 18px; line-height: 24px; color: #545b64; letter-spacing: -0.06px; }
.actions { display: flex; gap: 18px; margin-top: -3px; }
.delete { width: 128px; }
.edit { width: 103px; }
.dbody { padding: 41px 30px 0; color: #16191f; line-height: 33px; }
label { display: block; height: 33px; margin-bottom: 3px; color: #545b64; letter-spacing: 0.15px; }
.arn { display: flex; padding-left: 7px; margin-bottom: 30px; letter-spacing: 0.33px; }
.arn svg { margin: 6px 7px 0 0; }
.t1 { letter-spacing: 0.07px; }
.t3 { letter-spacing: 0.1px; }
.act { display: flex; height: 48px; margin: 30px 0 29px; gap: 30px; }
.act .btn { margin-top: 1px; }
.t2 { width: 347px; letter-spacing: 0.11px; }
.t4 { width: 92px; letter-spacing: 0.33px; }
.attach { width: 274px; }
.configure { width: 163px; }

.tools { width: 61px; background: #fff; border-left: 2px solid #c6cbcd; padding: 18px 0 0 18px; }

.awsfoot { height: 45px; flex: none; display: flex; align-items: center; padding-left: 24px; background: #232f3e; border-top: 1px solid #414d5c; color: #fff; font-size: 18px; font-weight: 500; letter-spacing: -0.37px; }
.awsfoot svg { margin-top: 3px; }
.f1 { width: 125px; margin-left: 8px; letter-spacing: -0.25px; }
.f2 { width: 896px; }
.f3 { width: 456px; }
.f4 { width: 96px; }
.f5 { width: 87px; }
.f6 { letter-spacing: -0.52px; }

.page-scroll { width: 25px; background: #f0f0f0; display: flex; flex-direction: column; align-items: flex-start; padding: 10px 0 9px 2px; }
.page-scroll .thumb { width: 20px; height: 622px; margin-top: 164px; background: #c1c1c1; }

.taskbar { height: 72px; flex: none; display: flex; align-items: flex-start; border-top: 2px solid #4b4344; color: #fff; font-size: 18px; background: linear-gradient(90deg, #232126 0, #282024 180px, #37192a 320px, #3a191d 370px, #2c1d1e 440px, #2a2029 700px, #341b22 930px, #471113 1075px, #351719 1220px, #321c1b 1340px, #4b1510 1500px, #451616 1580px, #311a23 1690px, #42191a 1790px, #271f21 1870px, #202022 1920px); }
.weather { position: relative; display: flex; width: 530px; padding-left: 27px; }
.weather svg { margin-top: 6px; }
.wbadge { position: absolute; left: 46px; top: 7px; width: 24px; height: 24px; border-radius: 50%; background: #ff8f9a; color: #1b1b1b; font-size: 16px; line-height: 24px; text-align: center; }
.wtext { display: flex; flex-direction: column; margin: 9px 0 0 7px; line-height: 24px; }
.deg { letter-spacing: -0.3px; }
.cond { color: #c9c5c7; letter-spacing: -0.3px; }
.start { margin: 17px 0 0; }
.tsearch { width: 330px; height: 48px; margin: 10px 0 0 19px; border: 1px solid #5d5559; border-top-color: #756c70; border-radius: 24px; background: #484044; display: flex; }
.mag { margin: 12px 0 0 17px; }
.tsearch span { margin-left: 15px; line-height: 46px; color: #dcdadb; width: 196px; font-size: 19px; }
.tiger { margin: 4px 0 0; }
.tv { margin: 17px 0 0 18px; }
.chat { margin: 16px 0 0 29px; }
.store { margin: 17px 0 0 31px; }
.exp { margin: 18px 0 0 30px; }
.edge { margin: 16px 0 0 29px; }
.ctile { position: relative; width: 60px; height: 60px; margin: 4px 0 0 18px; padding: 12px; border-radius: 6px; }
.active { background: rgba(255, 255, 255, .08); border: 1px solid rgba(255, 255, 255, .06); padding: 11px; }
.idle { margin-left: 6px; }
.cbadge { position: absolute; left: 32px; top: 5px; width: 24px; height: 24px; border-radius: 50%; background: #ec407a; color: #ffd6e4; font: 15px/24px Roboto, sans-serif; text-align: center; }
.idle .cbadge { background: #0288d1; color: #cde9f8; font: 700 11px/24px "Liberation Serif", serif; }
.ind { position: absolute; left: 18px; top: 54px; width: 24px; height: 5px; border-radius: 3px; background: #f8836b; }
.idle .ind { left: 26px; width: 8px; background: #a49999; }
.chev { margin: 29px 0 0 106px; }
.od { margin: 26px 0 0 27px; }
.lang { display: flex; flex-direction: column; width: 40px; margin: 12px 0 0 24px; line-height: 23px; text-align: center; letter-spacing: -0.3px; }
.wifi { margin: 25px 0 0 25px; }
.vol { margin: 24px 0 0 11px; }
.bat { margin: 26px 0 0 11px; }
.clock { display: flex; flex-direction: column; width: 116px; margin-top: 9px; line-height: 24px; text-align: right; letter-spacing: -0.3px; }
.nbell { margin: 23px 0 0 14px; }
</style>
